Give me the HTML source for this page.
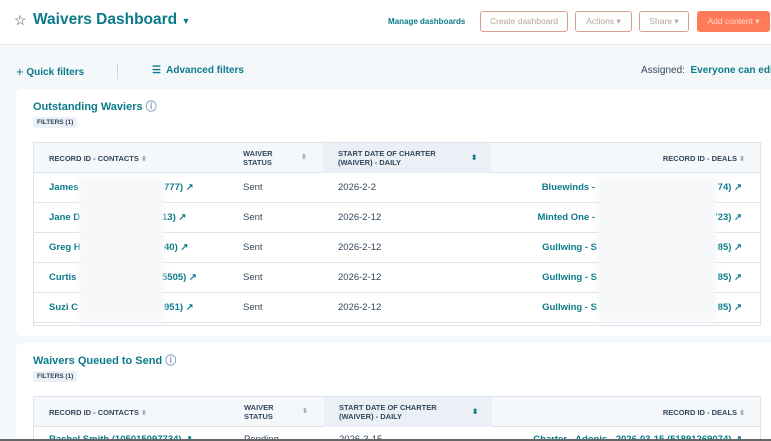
<!DOCTYPE html><html><head><style>
*{box-sizing:border-box;margin:0;padding:0}
html,body{width:771px;height:441px;overflow:hidden}
body{background:#f5f8fa;font-family:"Liberation Sans",sans-serif;color:#33475b;position:relative;font-size:9px}
.a{position:absolute}
.teal{color:#0b7b8b;font-weight:bold}
.btn{position:absolute;top:11px;height:21px;border:1px solid #d9a08d;border-radius:3px;background:#fff;color:#b5a49c;font-size:8.5px;text-align:center;line-height:19px}
.card{position:absolute;left:16px;width:760px;background:#fff;border-radius:5px}
.badge{position:absolute;left:17px;background:#eaf0f6;font-size:6.5px;font-weight:bold;padding:0 4px;height:11px;line-height:11px;border-radius:2px;color:#33475b}
.tbl{position:absolute;left:17px;width:728px;border:1px solid #dfe3eb;background:#fff}
.th{position:absolute;top:0;height:30px;background:#f5f8fa;width:100%;border-bottom:1px solid #dfe3eb}
.h{position:absolute;font-size:7.5px;font-weight:bold;line-height:9px}
.row{position:absolute;left:0;width:100%;height:30px;border-bottom:1px solid #dfe3eb;font-size:9.5px}
.row span{position:absolute;top:9px;white-space:nowrap}
.blur{position:absolute;background:#f5f7f9;filter:blur(3px)}
.sort{color:#aab;font-size:7px}
</style></head><body>
<div class="a" style="left:0;top:0;width:771px;height:45px;background:#fff;border-bottom:1px solid #e5e8eb"></div>
<div class="a" style="left:14px;top:12px;font-size:14px;color:#33475b">☆</div>
<div class="a teal" style="left:33px;top:11px;font-size:15.5px">Waivers Dashboard <span style="font-size:9px">▼</span></div>
<div class="a teal" style="left:388px;top:17px;font-size:8px">Manage dashboards</div>
<div class="btn" style="left:480px;width:88px">Create dashboard</div>
<div class="btn" style="left:575px;width:57px">Actions ▾</div>
<div class="btn" style="left:639px;width:50px">Share ▾</div>
<div class="btn" style="left:697px;width:73px;background:#ff7a59;border-color:#ff7a59;color:#ffd9cc">Add content ▾</div>
<div class="a teal" style="left:16px;top:63px;font-size:10px;white-space:nowrap"><span style="font-size:13px;font-weight:normal;position:relative;top:1px">+</span> Quick filters</div>
<div class="a" style="left:117px;top:63px;width:1px;height:16px;background:#cbd6e2"></div>
<div class="a teal" style="left:152px;top:65px;font-size:10px;white-space:nowrap">☰&nbsp; Advanced filters</div>
<div class="a" style="left:641px;top:65px;font-size:10px;white-space:nowrap">Assigned:&nbsp; <b style="color:#0b7b8b">Everyone can edit</b></div>

<div class="card" style="top:89px;height:247px">
<div class="a teal" style="left:17px;top:9px;font-size:11px">Outstanding Waviers <span style="color:#7c98b6">ⓘ</span></div>
<div class="badge" style="top:28px">FILTERS (1)</div>
<div class="tbl" style="top:53px;height:184px;overflow:hidden">
<div class="th"><div class="a" style="left:289px;width:168px;height:30px;background:#eaf0f6"></div>
<div class="h" style="left:15px;top:11px">RECORD ID - CONTACTS <span class="sort">⬍</span></div>
<div class="h" style="left:209px;top:6px">WAIVER<br>STATUS</div><div class="h sort" style="left:267px;top:10px">⬍</div>
<div class="h" style="left:304px;top:6px">START DATE OF CHARTER<br>(WAIVER) - DAILY</div><div class="h" style="left:437px;top:10px;color:#0b7b8b">⬍</div>
<div class="h" style="right:15px;top:11px">RECORD ID - DEALS <span class="sort">⬍</span></div></div>
<div class="row" style="top:30px"><span class="teal" style="left:15px">James</span><span class="teal" style="left:130px">777) ↗</span><span style="left:209px">Sent</span><span style="left:304px">2026-2-2</span><span class="teal" style="right:165px">Bluewinds -</span><span class="teal" style="right:18px">74) ↗</span></div>
<div class="row" style="top:60px"><span class="teal" style="left:15px">Jane D</span><span class="teal" style="left:128px">13) ↗</span><span style="left:209px">Sent</span><span style="left:304px">2026-2-12</span><span class="teal" style="right:165px">Minted One -</span><span class="teal" style="right:18px">'23) ↗</span></div>
<div class="row" style="top:90px"><span class="teal" style="left:15px">Greg H</span><span class="teal" style="left:130px">40) ↗</span><span style="left:209px">Sent</span><span style="left:304px">2026-2-12</span><span class="teal" style="right:163px">Gullwing - S</span><span class="teal" style="right:18px">85) ↗</span></div>
<div class="row" style="top:120px"><span class="teal" style="left:15px">Curtis</span><span class="teal" style="left:128px">5505) ↗</span><span style="left:209px">Sent</span><span style="left:304px">2026-2-12</span><span class="teal" style="right:163px">Gullwing - S</span><span class="teal" style="right:18px">85) ↗</span></div>
<div class="row" style="top:150px"><span class="teal" style="left:15px">Suzi C</span><span class="teal" style="left:130px">951) ↗</span><span style="left:209px">Sent</span><span style="left:304px">2026-2-12</span><span class="teal" style="right:163px">Gullwing - S</span><span class="teal" style="right:18px">85) ↗</span></div>
<div class="blur" style="left:45px;top:34px;width:85px;height:144px"></div>
<div class="blur" style="left:564px;top:34px;width:118px;height:144px"></div>
</div></div>

<div class="card" style="top:343px;height:98px;border-radius:5px 5px 0 0">
<div class="a teal" style="left:17px;top:9px;font-size:11px">Waivers Queued to Send <span style="color:#7c98b6">ⓘ</span></div>
<div class="badge" style="top:28px">FILTERS (1)</div>
<div class="tbl" style="top:53px;height:45px;overflow:hidden">
<div class="th"><div class="a" style="left:290px;width:168px;height:30px;background:#eaf0f6"></div>
<div class="h" style="left:15px;top:11px">RECORD ID - CONTACTS <span class="sort">⬍</span></div>
<div class="h" style="left:210px;top:6px">WAIVER<br>STATUS</div><div class="h sort" style="left:268px;top:10px">⬍</div>
<div class="h" style="left:305px;top:6px">START DATE OF CHARTER<br>(WAIVER) - DAILY</div><div class="h" style="left:438px;top:10px;color:#0b7b8b">⬍</div>
<div class="h" style="right:15px;top:11px">RECORD ID - DEALS <span class="sort">⬍</span></div></div>
<div class="row" style="top:30px"><span class="teal" style="left:15px;top:7px">Rachel Smith (105015097734) ↗</span><span style="left:210px;top:7px">Pending</span><span style="left:305px;top:7px">2026-3-15</span><span class="teal" style="right:18px;top:7px">Charter - Adonis - 2026-03-15 (51891269074) ↗</span></div>
</div></div>
<div class="a" style="left:0;top:439px;width:771px;height:2px;background:#666"></div>
</body></html>
